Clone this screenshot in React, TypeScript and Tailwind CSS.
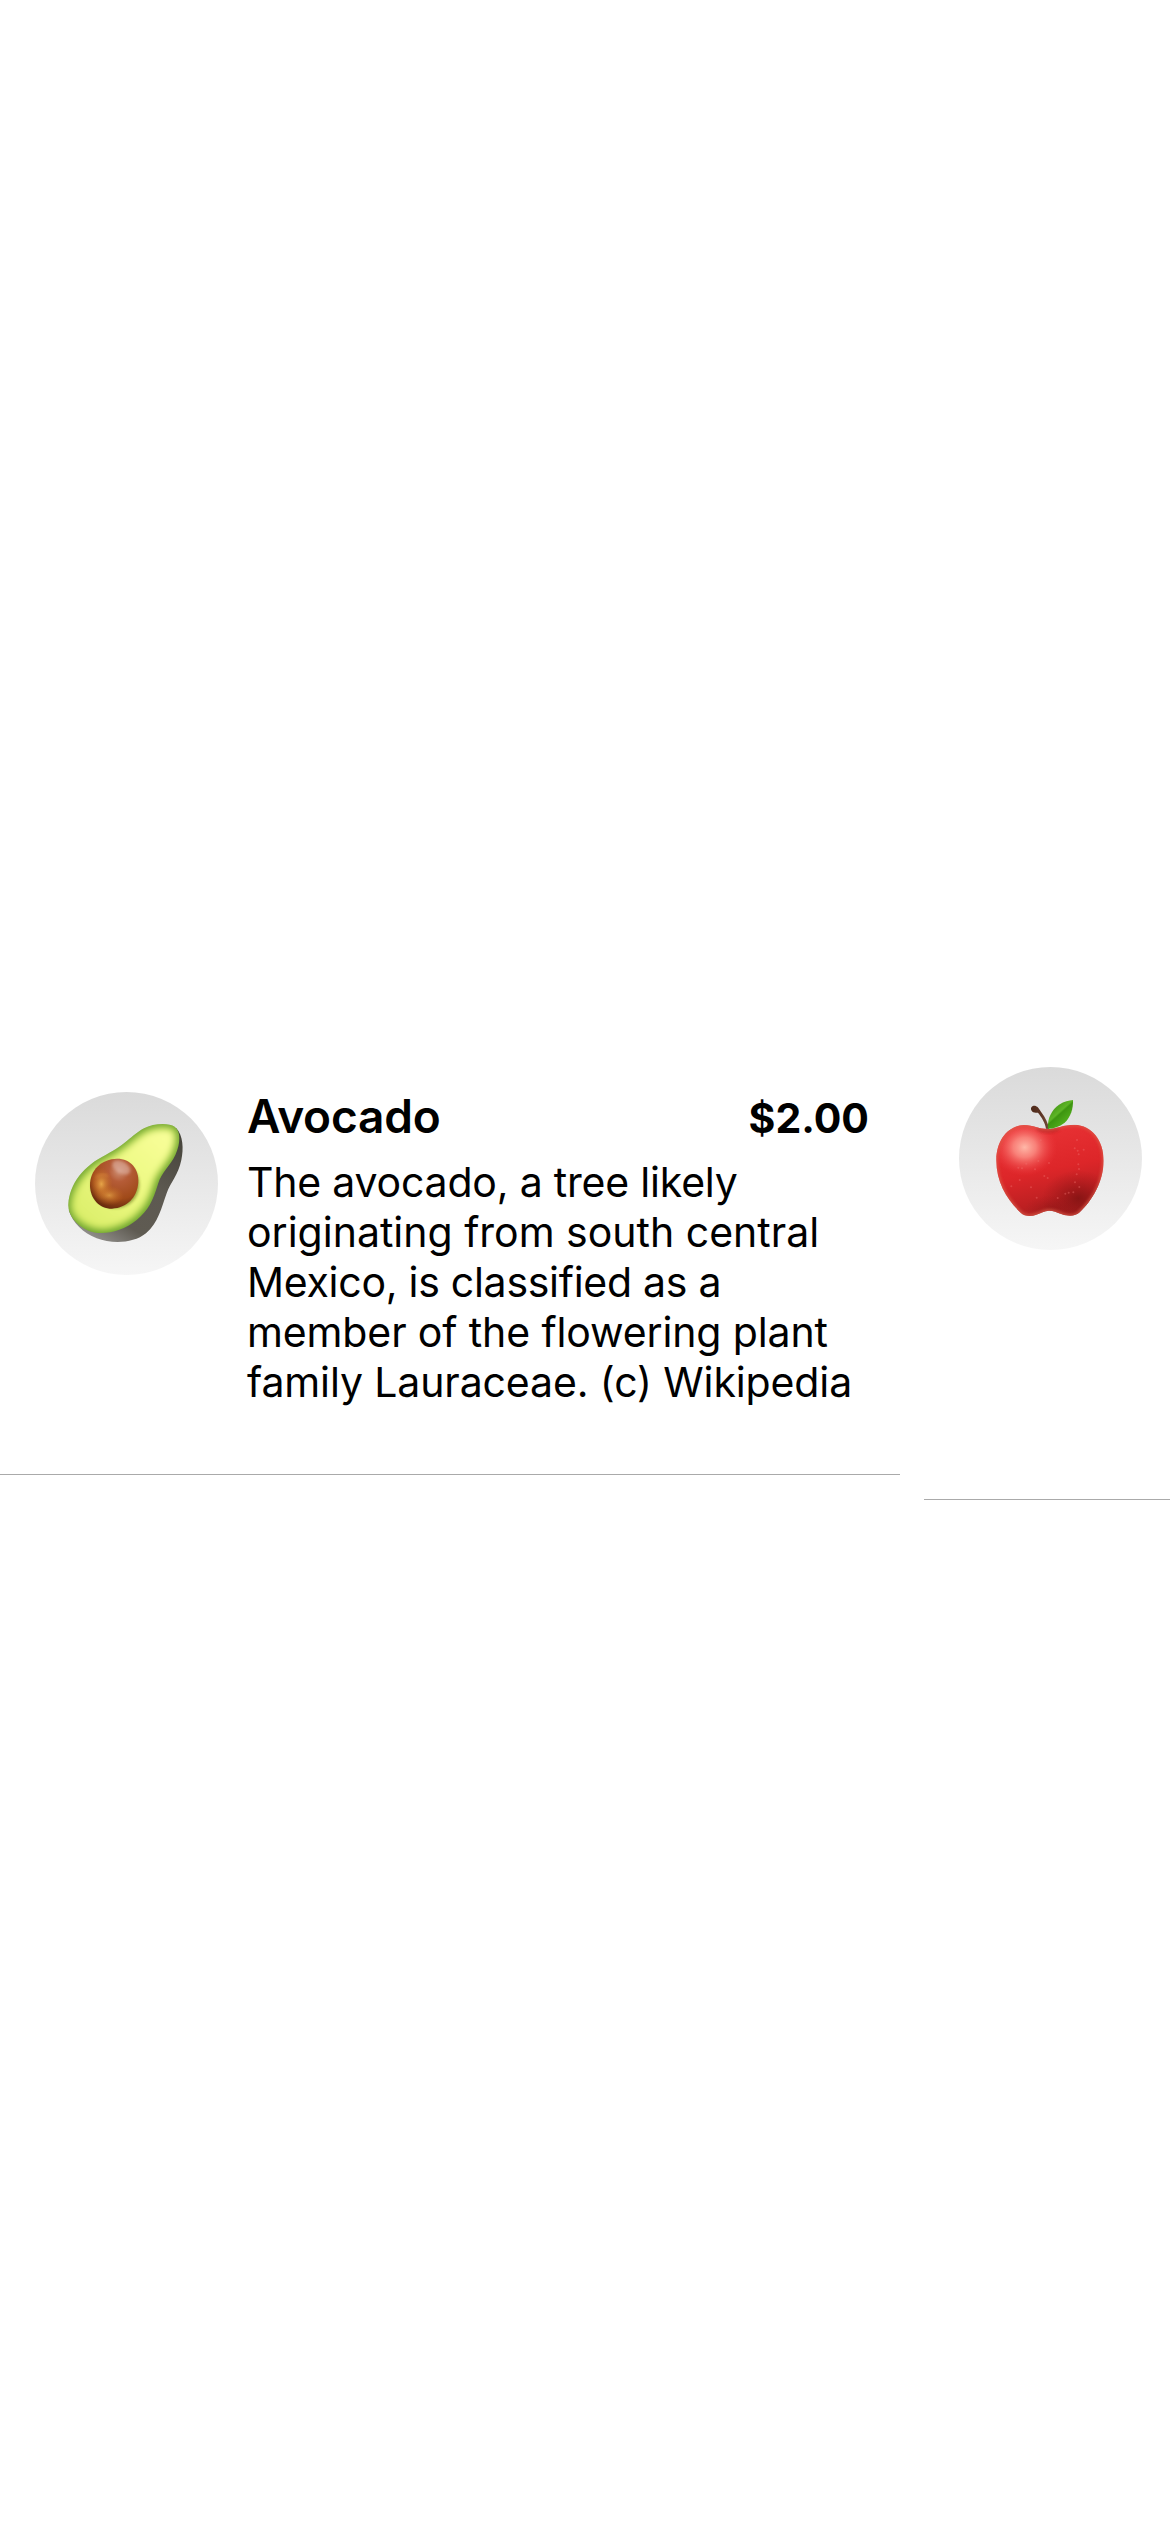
import React from 'react';

function Avocado() {
  return (
    <svg viewBox="45 66 549 549" className="h-[183px] w-[183px]" aria-label="Avocado">
      <defs>
        <linearGradient id="skin" x1="0.9" y1="0" x2="0.3" y2="1">
          <stop offset="0" stopColor="#45433a" />
          <stop offset="0.45" stopColor="#5d5951" />
          <stop offset="0.8" stopColor="#5f5b52" />
          <stop offset="1" stopColor="#8d8b87" />
        </linearGradient>
        <linearGradient id="rim" x1="0" y1="0" x2="0.7" y2="1">
          <stop offset="0" stopColor="#74aa34" />
          <stop offset="0.5" stopColor="#74a634" />
          <stop offset="1" stopColor="#68a32b" />
        </linearGradient>
        <linearGradient id="flesh" x1="1" y1="0" x2="0.1" y2="1">
          <stop offset="0" stopColor="#faff9c" />
          <stop offset="0.5" stopColor="#edf983" />
          <stop offset="1" stopColor="#daee68" />
        </linearGradient>
        <radialGradient id="seed" cx="0.6" cy="0.25" r="0.85">
          <stop offset="0" stopColor="#cf9076" />
          <stop offset="0.25" stopColor="#b55c37" />
          <stop offset="0.65" stopColor="#a04a19" />
          <stop offset="1" stopColor="#54200a" />
        </radialGradient>
        <radialGradient id="seedGlow">
          <stop offset="0" stopColor="#e7a548" />
          <stop offset="1" stopColor="#c96c22" stopOpacity="0" />
        </radialGradient>
        <filter id="soft9" x="-20%" y="-20%" width="140%" height="140%">
          <feGaussianBlur stdDeviation="9" />
        </filter>
        <filter id="soft5" x="-30%" y="-30%" width="160%" height="160%">
          <feGaussianBlur stdDeviation="5" />
        </filter>
        <clipPath id="face">
          <path d="M145 402C149 340 191 287 258 254C315 226 334 196 372 175C399 160 447 158 464 170C483 184 482 219 466 255C450 289 426 304 414 342C398 393 386 420 350 450C305 487 242 498 205 482C168 466 143 433 145 402Z" />
        </clipPath>
      </defs>
      <path
        d="M146 420C158 460 190 488 230 505C275 522 340 521 378 490C414 460 425 412 440 370C451 337 475 315 484 270C491 238 490 196 468 174L350 250L200 440Z"
        fill="url(#skin)"
      />
      <g clipPath="url(#face)">
        <rect x="130" y="150" width="370" height="360" fill="url(#rim)" />
        <path
          d="M157 402C162 350 200 300 264 267C319 239 342 207 379 187C403 175 443 171 457 181C470 193 467 221 454 249C437 285 411 302 399 340C385 387 373 410 341 438C300 471 246 483 212 468C178 455 155 431 157 402Z"
          fill="url(#flesh)"
          stroke="#c1df57"
          strokeWidth="12"
          filter="url(#soft9)"
        />
      </g>
      <ellipse cx="286" cy="344" rx="72" ry="71" fill="#657018" opacity="0.6" filter="url(#soft5)" />
      <path
        d="M210 347C209 300 245 267 291 266C332 266 357 297 355 337C352 383 320 414 276 416C236 416 211 385 210 347Z"
        fill="url(#seed)"
      />
      <ellipse cx="244" cy="342" rx="34" ry="50" fill="url(#seedGlow)" />
      <ellipse cx="268" cy="376" rx="44" ry="30" fill="url(#seedGlow)" opacity="0.75" />
      <ellipse cx="304" cy="292" rx="30" ry="18" fill="#dfb4a5" opacity="0.6" filter="url(#soft5)" transform="rotate(30 304 292)" />
      <path d="M228 322Q247 306 264 319" fill="none" stroke="#df8c3e" strokeWidth="5" opacity="0.6" filter="url(#soft5)" />
    </svg>
  );
}

const SPECKLES = [
  [302, 271], [411, 270], [404, 295], [413, 302], [431, 299], [416, 313], [327, 339], [295, 333],
  [235, 353], [246, 355], [285, 358], [259, 341], [415, 343], [417, 357], [410, 373], [313, 378],
  [323, 384], [239, 390], [273, 412], [418, 411], [386, 428], [353, 444], [376, 431], [290, 443],
  [405, 397], [214, 409], [400, 427],
];

function Apple() {
  return (
    <svg viewBox="57 51 549 549" className="h-[183px] w-[183px]" aria-label="Apple">
      <defs>
        <linearGradient id="appleBase" x1="0.35" y1="0" x2="0.6" y2="1">
          <stop offset="0" stopColor="#ea3336" />
          <stop offset="0.5" stopColor="#dd2629" />
          <stop offset="0.8" stopColor="#be2022" />
          <stop offset="1" stopColor="#a41f1e" />
        </linearGradient>
        <radialGradient id="appleLight">
          <stop offset="0" stopColor="#ffb8a8" />
          <stop offset="0.35" stopColor="#fc8f85" stopOpacity="0.85" />
          <stop offset="1" stopColor="#f0393e" stopOpacity="0" />
        </radialGradient>
        <radialGradient id="appleShade">
          <stop offset="0" stopColor="#74100f" stopOpacity="0.7" />
          <stop offset="1" stopColor="#8e1215" stopOpacity="0" />
        </radialGradient>
        <linearGradient id="leaf" x1="0.2" y1="0.1" x2="0.75" y2="0.8">
          <stop offset="0" stopColor="#3f8d12" />
          <stop offset="0.46" stopColor="#5db526" />
          <stop offset="0.54" stopColor="#3d9510" />
          <stop offset="1" stopColor="#54b11d" />
        </linearGradient>
        <linearGradient id="stem" x1="0" y1="0.5" x2="1" y2="0.3">
          <stop offset="0" stopColor="#4b2819" />
          <stop offset="0.55" stopColor="#5c3424" />
          <stop offset="1" stopColor="#7d5543" />
        </linearGradient>
        <filter id="edge" x="-20%" y="-20%" width="140%" height="140%">
          <feGaussianBlur stdDeviation="4" />
        </filter>
        <clipPath id="body">
          <path d="M322 237C350 237 368 224 404 224C455 226 491 270 491 332C490 397 457 450 419 487C407 499 386 500 366 493C350 487 341 482 327 482C313 483 303 489 289 494C273 500 253 499 242 488C202 450 168 397 169 328C170 269 205 227 252 225C281 225 294 237 322 237Z" />
        </clipPath>
      </defs>
      <g clipPath="url(#body)">
        <rect x="160" y="215" width="340" height="290" fill="url(#appleBase)" />
        <ellipse cx="415" cy="445" rx="110" ry="85" fill="url(#appleShade)" />
        <ellipse cx="330" cy="475" rx="75" ry="40" fill="url(#appleShade)" opacity="0.45" />
        <ellipse cx="254" cy="292" rx="98" ry="86" fill="url(#appleLight)" />
        <ellipse cx="324" cy="236" rx="35" ry="12" fill="#a81b1b" opacity="0.55" filter="url(#edge)" />
        <path
          d="M322 237C350 237 368 224 404 224C455 226 491 270 491 332C490 397 457 450 419 487C407 499 386 500 366 493C350 487 341 482 327 482C313 483 303 489 289 494C273 500 253 499 242 488C202 450 168 397 169 328C170 269 205 227 252 225C281 225 294 237 322 237Z"
          fill="none"
          stroke="#dc5b48"
          strokeWidth="10"
          opacity="0.75"
          filter="url(#edge)"
        />
        {SPECKLES.map(([x, y]) => (
          <circle key={`${x}-${y}`} cx={x} cy={y} r="3" fill="#f0706d" opacity="0.4" />
        ))}
      </g>
      <path
        d="M274 181C270 172 278 166 287 168C296 171 299 180 304 187C316 203 325 220 327 237L318 236C316 219 305 202 294 188C287 188 278 190 274 181Z"
        fill="url(#stem)"
      />
      <path d="M324 236C321 204 336 179 357 164C373 154 387 151 399 150C400 174 393 201 374 218C358 230 340 236 324 236Z" fill="url(#leaf)" />
    </svg>
  );
}

function Avatar({ children }: { children: React.ReactNode }) {
  return (
    <div className="h-[183px] w-[183px] shrink-0 overflow-hidden rounded-full bg-linear-to-b from-[#dadada] to-[#f6f6f6]">
      {children}
    </div>
  );
}

export default function App() {
  return (
    <main className="flex h-[2532px] w-[1170px] items-center gap-6 overflow-hidden bg-white pb-px font-['Inter',sans-serif] text-black">
      <article className="flex h-[419px] w-[900px] shrink-0 items-start gap-7 border-b border-[#aaaaaa] pt-9 pr-[31px] pl-[35px]">
        <Avatar>
          <Avocado />
        </Avatar>
        <div className="-mt-1 flex-1 pl-px">
          <header className="flex items-baseline justify-between">
            <h1 className="text-[46px] leading-[56px] font-semibold tracking-[-0.2px]">Avocado</h1>
            <span className="text-[41px] leading-[50px] font-bold">$2.00</span>
          </header>
          <p className="mt-[13px] text-[41px] leading-[50px] whitespace-nowrap">
            <span className="block tracking-[-0.2px]">The avocado, a tree likely</span>
            <span className="block">originating from south central</span>
            <span className="block tracking-[-0.27px]">Mexico, is classified as a</span>
            <span className="block tracking-[-0.12px]">member of the flowering plant</span>
            <span className="block tracking-[-0.12px]">family Lauraceae. (c) Wikipedia</span>
          </p>
        </div>
      </article>
      <article className="flex h-[469px] w-[900px] shrink-0 items-start border-b border-[#aaaaaa] pt-9 pl-[35px]">
        <Avatar>
          <Apple />
        </Avatar>
      </article>
    </main>
  );
}
